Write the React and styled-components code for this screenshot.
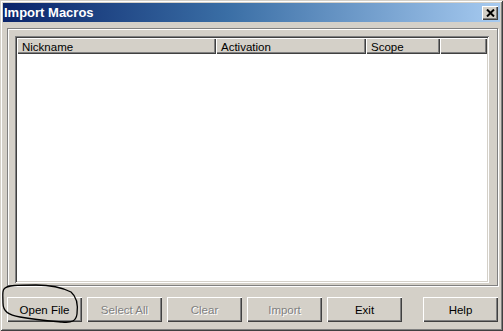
import React from "react";
import styled, { createGlobalStyle, css } from "styled-components";

const Global = createGlobalStyle`
  html, body { margin: 0; padding: 0; background: #d4d0c8; }
  body { font-family: "Liberation Sans", Arial, sans-serif; font-size: 11px; }
  * { box-sizing: border-box; }
`;

const Window = styled.div`
  position: relative;
  width: 503px;
  height: 331px;
  background: #d4d0c8;
  display: flex;
  flex-direction: column;
  padding: 3px 3px 3px 3px;
  box-shadow:
    inset 1px 1px 0 #d4d0c8,
    inset -1px -1px 0 #404040,
    inset 2px 2px 0 #ffffff,
    inset -2px -2px 0 #808080;
`;

const TitleBar = styled.div`
  height: 19px;
  flex: none;
  display: flex;
  align-items: center;
  justify-content: space-between;
  padding: 0 2px 0 1px;
  background: linear-gradient(to right, #0a246a 0%, #3a6ea5 45%, #a6caf0 100%);
`;

const Title = styled.span`
  color: #ffffff;
  font-weight: bold;
  font-size: 13px;
  line-height: 19px;
`;

const CloseButton = styled.div`
  width: 16px;
  height: 14px;
  margin-top: 1px;
  background: #d4d0c8;
  display: flex;
  align-items: center;
  justify-content: center;
  box-shadow:
    inset 1px 1px 0 #ffffff,
    inset -1px -1px 0 #404040,
    inset -2px -2px 0 #808080;
`;

const Content = styled.div`
  flex: 1;
  display: flex;
  flex-direction: column;
  padding: 6px 2px 0 4px;
`;

const Frame = styled.div`
  height: 258px;
  flex: none;
  display: flex;
  padding: 7px 8px 2px 7px;
  border: 1px solid #808080;
  box-shadow: inset 1px 1px 0 #ffffff, 1px 1px 0 #ffffff;
`;

const ListBox = styled.div`
  flex: 1;
  background: #ffffff;
  display: flex;
  flex-direction: column;
  padding: 2px;
  box-shadow:
    inset 1px 1px 0 #808080,
    inset -1px -1px 0 #ffffff,
    inset 2px 2px 0 #404040,
    inset -2px -2px 0 #d4d0c8;
`;

const HeaderRow = styled.div`
  display: flex;
  height: 16px;
  flex: none;
`;

const HeaderCell = styled.div`
  ${(p) => (p.$w ? css`width: ${p.$w}px; flex: none;` : css`flex: 1;`)}
  background: #d4d0c8;
  color: #000000;
  padding: 2px 0 0 5px;
  line-height: 14px;
  font-size: 11.5px;
  white-space: nowrap;
  box-shadow:
    inset 1px 1px 0 #ffffff,
    inset -1px -1px 0 #404040,
    inset -2px -2px 0 #808080;
`;

const ButtonRow = styled.div`
  display: flex;
  gap: 5px;
  margin-top: 11px;
`;

const Button = styled.div`
  width: 75px;
  height: 25px;
  display: flex;
  align-items: center;
  justify-content: center;
  background: #d4d0c8;
  font-size: 11.5px;
  color: ${(p) => (p.$disabled ? "#808080" : "#000000")};
  text-shadow: ${(p) => (p.$disabled ? "1px 1px 0 #ffffff" : "none")};
  margin-left: ${(p) => (p.$push ? "auto" : "0")};
  box-shadow:
    inset 1px 1px 0 #ffffff,
    inset -1px -1px 0 #404040,
    inset -2px -2px 0 #808080;
`;

const Annotation = styled.svg`
  position: absolute;
  left: 0;
  top: 280px;
  pointer-events: none;
`;

export default function App() {
  return (
    <>
      <Global />
      <Window>
        <TitleBar>
          <Title>Import Macros</Title>
          <CloseButton>
            <svg width="9" height="8" viewBox="0 0 9 8">
              <path d="M1 0.5 L8 7.5 M8 0.5 L1 7.5" stroke="#000" strokeWidth="2" fill="none" />
            </svg>
          </CloseButton>
        </TitleBar>
        <Content>
          <Frame>
            <ListBox>
              <HeaderRow>
                <HeaderCell $w={199}>Nickname</HeaderCell>
                <HeaderCell $w={150}>Activation</HeaderCell>
                <HeaderCell $w={74}>Scope</HeaderCell>
                <HeaderCell />
              </HeaderRow>
            </ListBox>
          </Frame>
          <ButtonRow>
            <Button>Open File</Button>
            <Button $disabled>Select All</Button>
            <Button $disabled>Clear</Button>
            <Button $disabled>Import</Button>
            <Button>Exit</Button>
            <Button $push>Help</Button>
          </ButtonRow>
        </Content>
        <Annotation width="90" height="50" viewBox="0 280 90 50">
          <path
            d="M4 289 C7 285 18 285 36 285 C52 285 63 288 71 292 C77 297 78 306 77 314 C76 321 72 323 62 322 C50 321 36 320 20 317 C9 315 3 312 3 303 C3 296 2 291 4 289 Z"
            stroke="#000"
            strokeWidth="1.3"
            fill="none"
          />
        </Annotation>
      </Window>
    </>
  );
}
